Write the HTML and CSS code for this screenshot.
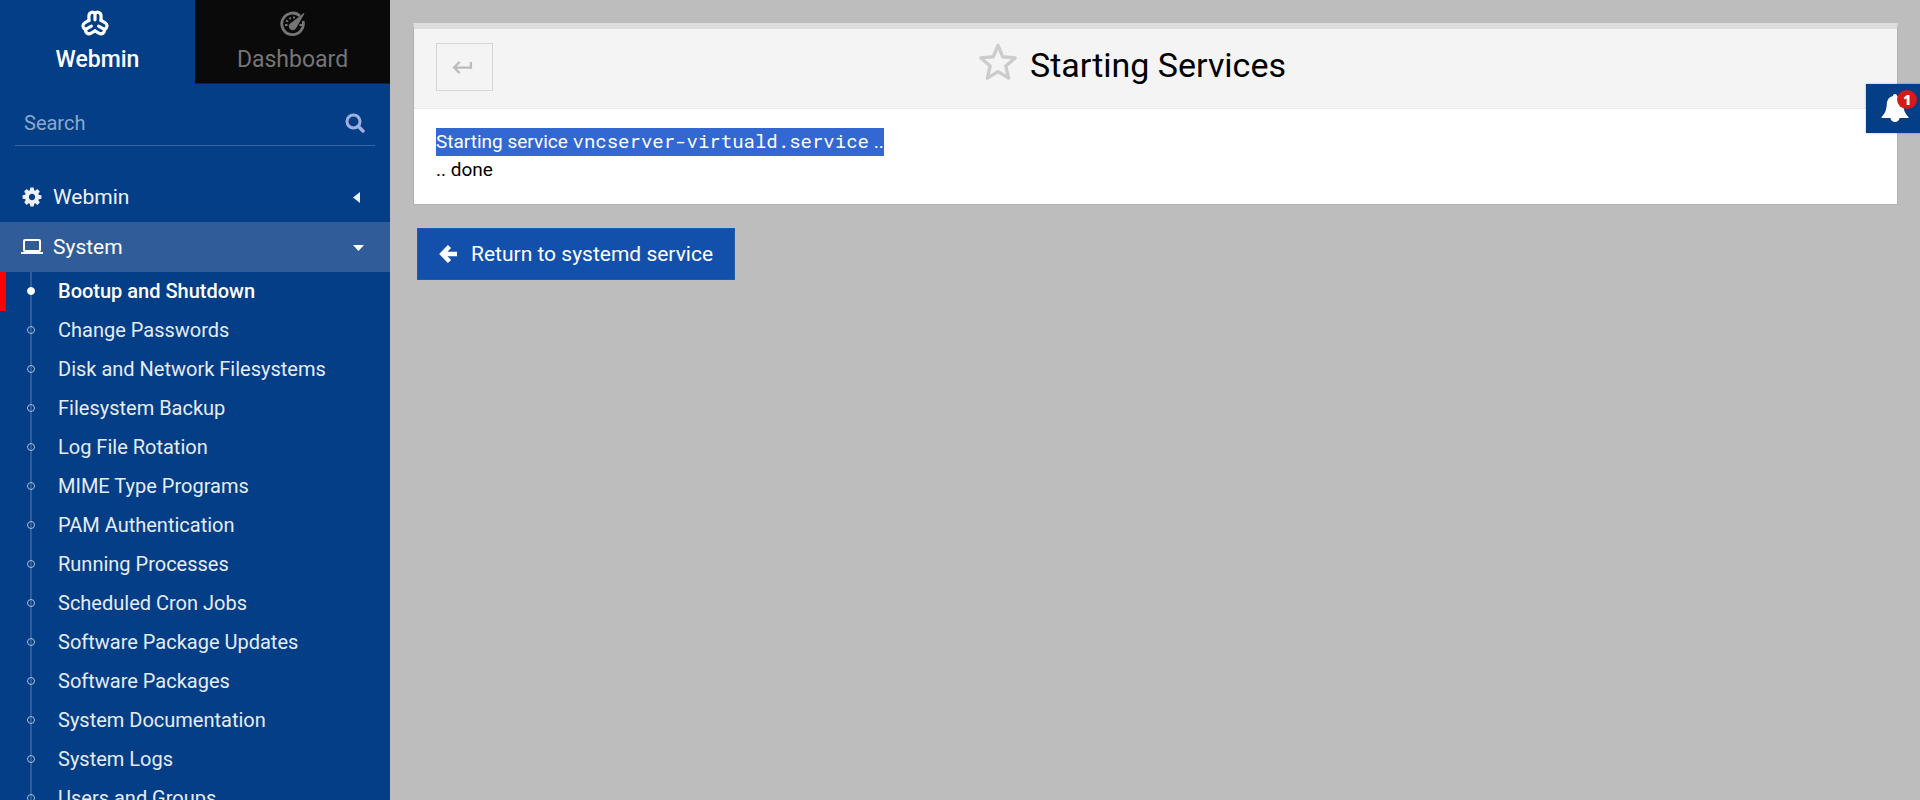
FILE: index.html
```html
<!DOCTYPE html>
<html lang="en">
<head>
<meta charset="utf-8">
<title>Starting Services</title>
<link rel="stylesheet" href="styles.css">
</head>
<body>
<div class="app">
  <aside class="sidebar">
    <nav class="tabs" aria-label="Product">
      <a class="tab tab-active" href="#webmin">
        <svg class="tab-icon tab-logo" viewBox="-15 -15 30 30" fill="none" stroke="currentColor" stroke-width="3.400" stroke-linecap="round" stroke-linejoin="round">
          <g id="lobe"><path d="M-6.500 -3.700V-8.500C-6.500-13-2-13.500 0-11.500C2-13.500 6.500-13 6.500-8.500V-3.700"/><path d="M0 -11V-4.500"/></g>
          <use href="#lobe" transform="rotate(120)"/>
          <use href="#lobe" transform="rotate(240)"/>
        </svg>
        <span>Webmin</span>
      </a>
      <a class="tab" href="#dashboard">
        <svg class="tab-icon" viewBox="0 0 28 28" fill="none" stroke="currentColor">
          <path d="M21 6A10.800 10.800 0 1 0 24 11" stroke-width="2.800"/>
          <path d="M6 15h2.500M7 10.500l2.200 1M10.500 7.500l1.200 1.600M15 6.500v2M20.500 15H23" stroke-width="1.800"/>
          <path d="M25 3.500L17 17.500A3.500 3.500 0 1 1 12.500 13z" fill="currentColor" stroke-width="1"/>
        </svg>
        <span>Dashboard</span>
      </a>
    </nav>
    <form class="search">
      <input class="search-input" type="search" placeholder="Search" aria-label="Search">
      <button class="search-button" type="button" aria-label="Search">
        <svg class="icon-search" viewBox="0 0 20 20" fill="none" stroke="currentColor" stroke-linecap="round"><circle cx="8.500" cy="8.500" r="6.500" stroke-width="3"/><path d="M13.500 13.500l4.500 4.500" stroke-width="3.500"/></svg>
      </button>
    </form>
    <nav class="menu" aria-label="Modules">
      <button class="group" type="button" aria-expanded="false">
        <svg class="group-icon" viewBox="0 0 1792 1792" fill="currentColor"><path d="M1152 896q0-106-75-181t-181-75-181 75-75 181 75 181 181 75 181-75 75-181zm512-109v222q0 12-8 23t-20 13l-185 28q-19 54-39 91 35 50 107 138 10 12 10 25t-9 23q-27 37-99 108t-94 71q-12 0-26-9l-138-108q-44 23-91 38-16 136-29 186-7 28-36 28h-222q-14 0-24.500-8.500t-11.500-21.500l-28-184q-49-16-90-37l-141 107q-10 9-25 9-14 0-25-11-126-114-165-168-7-10-7-23 0-12 8-23 15-21 51-66.500t54-70.500q-27-50-41-99l-183-27q-13-2-21-12.500t-8-23.500v-222q0-12 8-23t19-13l186-28q14-46 39-92-40-57-107-138-10-12-10-24 0-10 9-23 26-36 98.500-107.500t94.500-71.500q13 0 26 10l138 107q44-23 91-38 16-136 29-186 7-28 36-28h222q14 0 24.500 8.500t11.500 21.500l28 184q49 16 90 37l142-107q9-9 24-9 13 0 25 10 129 119 165 170 7 8 7 22 0 12-8 23-15 21-51 66.500t-54 70.500q26 50 41 98l183 28q13 2 21 12.500t8 23.500z"/></svg>
        <span class="group-label">Webmin</span>
        <svg class="caret" viewBox="0 0 12 12" fill="currentColor"><path d="M8 1v11L1 6.500z"/></svg>
      </button>
      <button class="group group-open" type="button" aria-expanded="true">
        <svg class="group-icon" viewBox="0 0 22 22" fill="none" stroke="currentColor"><rect x="3" y="4" width="16" height="11" rx="1" stroke-width="2"/><path d="M0 17h22" stroke-width="2"/></svg>
        <span class="group-label">System</span>
        <svg class="caret" viewBox="0 0 12 12" fill="currentColor"><path d="M1 4h11L6.500 10z"/></svg>
      </button>
      <ul class="modules">
        <li><a class="module module-active" href="#m1">Bootup and Shutdown</a></li>
        <li><a class="module" href="#m2">Change Passwords</a></li>
        <li><a class="module" href="#m3">Disk and Network Filesystems</a></li>
        <li><a class="module" href="#m4">Filesystem Backup</a></li>
        <li><a class="module" href="#m5">Log File Rotation</a></li>
        <li><a class="module" href="#m6">MIME Type Programs</a></li>
        <li><a class="module" href="#m7">PAM Authentication</a></li>
        <li><a class="module" href="#m8">Running Processes</a></li>
        <li><a class="module" href="#m9">Scheduled Cron Jobs</a></li>
        <li><a class="module" href="#m10">Software Package Updates</a></li>
        <li><a class="module" href="#m11">Software Packages</a></li>
        <li><a class="module" href="#m12">System Documentation</a></li>
        <li><a class="module" href="#m13">System Logs</a></li>
        <li><a class="module" href="#m14">Users and Groups</a></li>
      </ul>
    </nav>
  </aside>
  <main class="content">
    <section class="panel">
      <header class="panel-header">
        <button class="back" type="button" aria-label="Back">
          <svg class="icon-back" viewBox="0 0 22 16" fill="none" stroke="currentColor" stroke-width="2.400"><path d="M20 2v6H2M8 2L2 8l6 6"/></svg>
        </button>
        <h1 class="title">
          <svg class="icon-star" viewBox="0 0 40 40" fill="none" stroke="currentColor" stroke-width="3.500" stroke-linejoin="round"><path d="M20 2.500l5 12 13 1.200-9.800 8.500 3 12.800L20 30.200 8.800 37l3-12.800L2 15.700l13-1.200z"/></svg>
          <span>Starting Services</span>
        </h1>
      </header>
      <div class="panel-body">
        <div><span class="selected">Starting service <code class="service">vncserver-virtuald.service</code> ..</span></div>
        <div>.. done</div>
      </div>
    </section>
    <a class="return" href="#service">
      <svg class="icon-return" viewBox="0 0 18 18" fill="none" stroke="currentColor" stroke-width="4.500"><path d="M18 9H3M10.500 1.500L3.300 9l7.200 7.500"/></svg>
      <span>Return to systemd service</span>
    </a>
  </main>
  <button class="alerts" type="button" aria-label="Notifications">
    <svg class="icon-bell" viewBox="0 0 28 28" fill="currentColor"><path d="M14 0c1.300 0 2 .8 2 2 3.800.9 6 4 6.200 8 .3 6 1.800 9.500 5.300 13v1H.5v-1C4 19.500 5.500 16 5.800 10 6 6 8.200 2.900 12 2c0-1.200.7-2 2-2z"/><path d="M9.500 24h9a4.500 4 0 0 1-9 0z"/></svg>
    <span class="badge">1</span>
  </button>
</div>
</body>
</html>
```
FILE: styles.css
```css
* {
  box-sizing: border-box;
}

body {
  margin: 0;
  background: #bdbdbd;
  color: #000;
  font-family: Roboto, "Liberation Sans", sans-serif;
  font-size: 19px;
}

button,
input {
  font: inherit;
}

a {
  color: inherit;
  text-decoration: none;
}

svg {
  display: block;
  flex: none;
}

.app {
  display: flex;
  height: 100vh;
  overflow: hidden;
}

.sidebar {
  flex: none;
  width: 390px;
  overflow: hidden;
  background: #043e87;
  color: #fff;
}

.tabs {
  display: flex;
}

.tab {
  display: flex;
  flex: 1;
  flex-direction: column;
  align-items: center;
  height: 84px;
  padding-top: 10px;
  border-bottom: 1px solid #222;
  background: #0a0a0a;
  color: #757575;
  font-size: 23px;
  line-height: 43px;
}

.tab-active {
  border-color: transparent;
  background: none;
  color: #fff;
  font-weight: 500;
}

.tab-icon {
  width: 28px;
  height: 28px;
}

.tab-logo {
  margin-right: 5px;
}

.search {
  display: flex;
  align-items: center;
  height: 42px;
  margin: 20px 15px 26px;
  padding-bottom: 3px;
  border-bottom: 1px solid #3568a5;
}

.search-input {
  flex: 1;
  min-width: 0;
  padding: 0 9px;
  border: 0;
  outline: 0;
  background: none;
  color: #fff;
  font-size: 20px;
}

.search-input::placeholder {
  color: #8ba8cb;
}

.search-button {
  padding: 0 10px;
  border: 0;
  background: none;
  color: #9fb0e0;
}

.icon-search {
  width: 20px;
  height: 20px;
}

.group {
  display: flex;
  align-items: center;
  gap: 10px;
  width: 100%;
  height: 50px;
  padding: 0 26px 0 21px;
  border: 0;
  background: none;
  color: #eef2f8;
  font-size: 21px;
  text-align: left;
}

.group-open {
  background: #305d99;
  color: #fff;
}

.group-icon {
  width: 22px;
  height: 22px;
}

.group-label {
  flex: 1;
}

.caret {
  width: 12px;
  height: 12px;
}

.modules {
  margin: 0;
  padding: 0;
  list-style: none;
}

.module {
  position: relative;
  display: block;
  padding: 0 0 1px 58px;
  color: #e6ecf3;
  font-size: 20px;
  line-height: 38px;
}

.module::before {
  position: absolute;
  top: 0;
  bottom: 0;
  left: 30px;
  width: 2px;
  background: #305d99;
  content: "";
}

/* The generated boxes are outside the universal rule, so size them explicitly. */
.module::after {
  position: absolute;
  top: 15px;
  left: 27px;
  box-sizing: border-box;
  width: 8px;
  height: 8px;
  border: 1px solid #a9bdd6;
  border-radius: 50%;
  content: "";
}

.module-active {
  box-shadow: inset 6px 0 #f00;
  color: #fff;
  font-weight: 500;
}

.module-active::after {
  border-color: #fff;
  background: #fff;
}

.content {
  flex: 1;
  min-width: 0;
  padding: 23px 22px 0 23px;
}

.panel {
  margin-bottom: 23px;
  border: 1px solid #b2b2b2;
  border-top: 6px solid #ddd;
  background: #fff;
}

.panel-header {
  display: grid;
  grid-template-columns: 57px 1fr 104px;
  height: 80px;
  padding: 14px 22px;
  border-bottom: 1px solid #e9e9e9;
  background: #f4f4f4;
}

.back {
  display: flex;
  align-items: center;
  justify-content: center;
  height: 48px;
  padding: 0 4px 0 0;
  border: 1px solid #d6d6d6;
  background: none;
  color: #bcbcbc;
}

.icon-back {
  width: 21px;
  height: 15px;
}

.title {
  display: flex;
  justify-content: center;
  gap: 12px;
  margin: 0;
  font-size: 34px;
  font-weight: 400;
  line-height: 44px;
}

.icon-star {
  width: 40px;
  height: 38px;
  color: #ccc;
}

.panel-body {
  padding: 19px 22px 20px;
  line-height: 28px;
}

.selected {
  display: inline-block;
  background: #3367d1;
  color: #fff;
  vertical-align: top;
}

.service {
  font-family: "Roboto Mono", "DejaVu Sans Mono", monospace;
  font-size: 19px;
  line-height: 1;
}

.return {
  display: inline-flex;
  align-items: center;
  gap: 14px;
  height: 52px;
  margin-left: 4px;
  padding: 0 21px;
  border: 1px solid #1d5aa8;
  background: #1350ab;
  color: #fff;
  font-size: 21px;
}

.icon-return {
  width: 18px;
  height: 18px;
}

.alerts {
  display: flex;
  align-items: flex-start;
  position: fixed;
  top: 84px;
  right: 0;
  width: 54px;
  height: 49px;
  padding: 10px 0 0 15px;
  border: 0;
  background: #043e87;
  box-shadow: 0 0 2px rgba(0, 0, 0, .3);
  color: #fff;
}

.icon-bell {
  width: 28px;
  height: 28px;
}

.badge {
  position: absolute;
  top: 6px;
  right: 3px;
  width: 20px;
  height: 19px;
  border-radius: 50%;
  background: #d71a18;
  font-family: "Open Sans", sans-serif;
  font-size: 14px;
  font-weight: 800;
  line-height: 19px;
  text-align: center;
}
```
